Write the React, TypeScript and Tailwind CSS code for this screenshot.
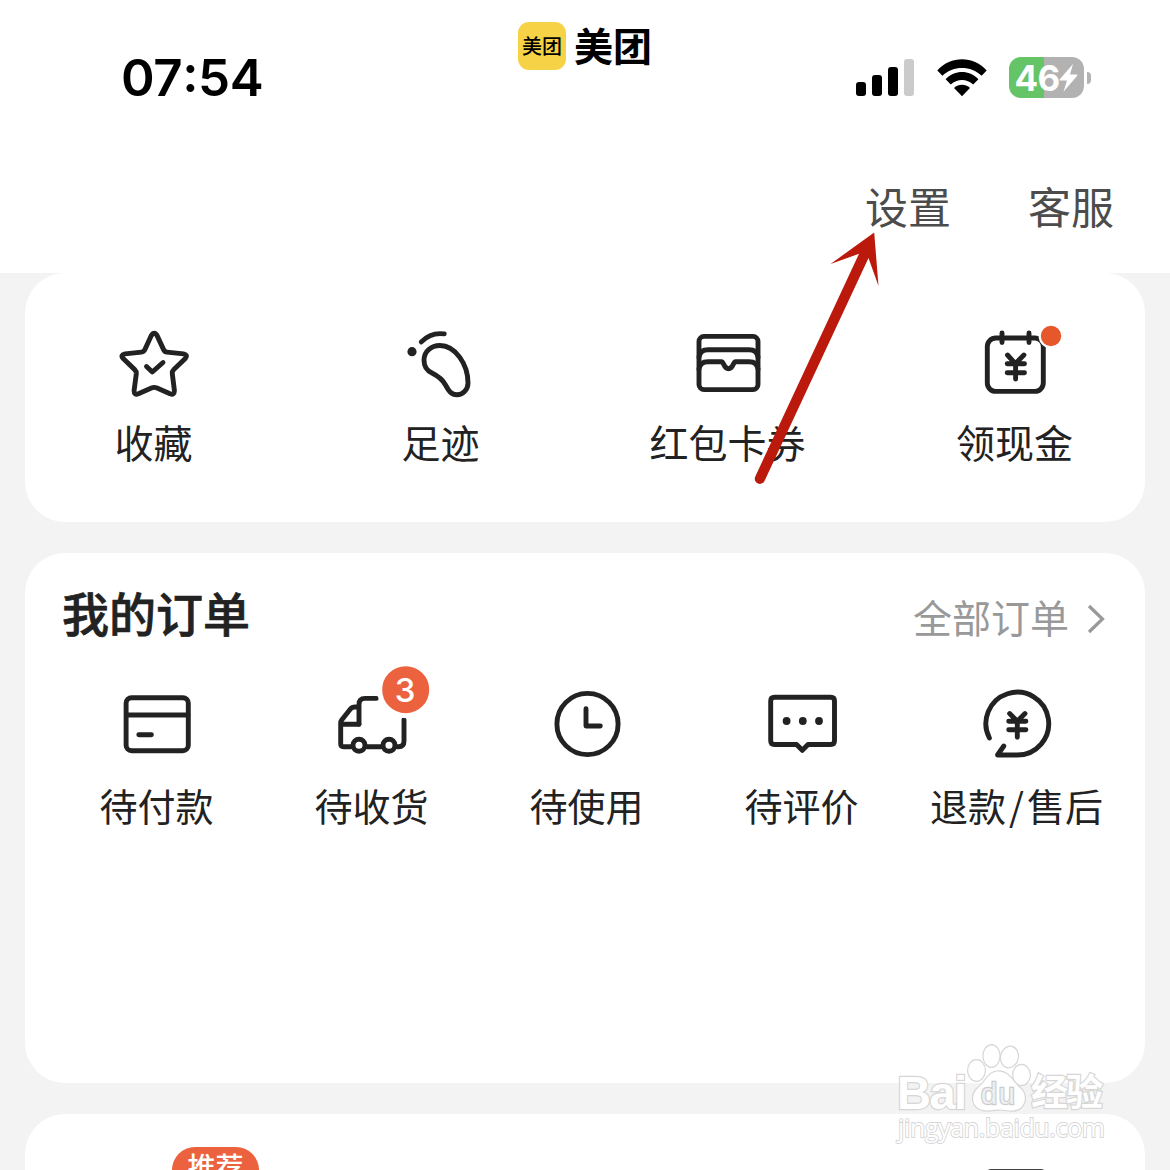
import type { ReactNode } from 'react';

type IconProps = {
  children: ReactNode;
};

type EntryProps = {
  label: ReactNode;
  icon: ReactNode;
};

const Icon = ({ children }: IconProps) => (
  <svg
    className="h-20 w-20 overflow-visible"
    viewBox="0 0 80 80"
    fill="none"
    stroke="#222222"
    strokeWidth="4.9"
    strokeLinecap="round"
    strokeLinejoin="round"
  >
    {children}
  </svg>
);

const StarIcon = () => (
  <Icon>
    <path d="M37.3 12.6 Q40.2 8 43.1 12.6 L49.6 26.6 Q50.6 28.8 53 29.1 L69.5 30.9 Q74.5 32 71.3 35.6 L59.8 46.6 Q58 48.3 58.3 50.8 L60.4 67.5 Q60.4 72.5 56 70.8 L43 65 Q40.2 63.8 37.4 65 L24.4 70.8 Q20 72.5 20.1 67.5 L22.3 50.8 Q22.5 48.3 20.7 46.6 L9.2 35.6 Q6 32 11 30.9 L27.5 29.1 Q29.9 28.8 30.9 26.6 Z" />
    <path d="M32.5 43.5 L38.3 49 L49 39.5" />
  </Icon>
);

const FootprintIcon = () => (
  <Icon>
    <circle cx="11" cy="28.7" r="4.6" fill="#222222" stroke="none" />
    <path d="M20.3 18.9 C27 12 34 9.6 43.2 10.9" />
    <path d="M39 22.5 C54 22.5 67 41 67 60 C67 67 61.5 71.7 56 71.7 C50 71.7 47.5 67.5 44.5 62 C41 55.5 37 53 31 50 C25.5 47.5 23 42 23 37 C23 28.5 30 22.5 39 22.5 Z" />
  </Icon>
);

const CouponIcon = () => (
  <Icon>
    <rect x="11" y="13.4" width="59" height="53.2" rx="5" />
    <path d="M11 34 Q12 26.7 20 26.7 H61 Q69 26.7 70 34" />
    <path d="M11 46 Q12 38.7 20 38.7 H33.5 C36 38.7 35.5 45.7 40.5 45.7 C45.5 45.7 45 38.7 47.5 38.7 H61 Q69 38.7 70 46" />
  </Icon>
);

const CashIcon = () => (
  <Icon>
    <rect x="12.3" y="15" width="56" height="53.4" rx="8.5" />
    <path d="M27 10 V19.5 M54 10 V19.5" />
    <path d="M32.5 32 L40.3 40.7 L48.9 32 M32.2 40.7 H49.5 M32.2 49.7 H49.5 M40.6 40.7 V56" />
    <circle cx="76" cy="13" r="11.3" fill="#e6582b" stroke="#ffffff" strokeWidth="2.2" />
  </Icon>
);

const PayIcon = () => (
  <Icon>
    <rect x="9.1" y="12.7" width="62.2" height="53" rx="5.5" />
    <path d="M9.5 30 H71 M21.8 49.7 H34.4" />
  </Icon>
);

const TruckIcon = () => (
  <Icon>
    <path d="M27 39.3 V19.5 Q27 13.4 33 13.4 H44.3" />
    <path d="M26.5 22 H23 Q20 22 18.2 24.2 L9.7 35 Q8.7 36.4 8.7 38 V59 Q8.7 61.7 11.5 61.7 H19 M9.5 39.3 H27" />
    <path d="M35 61.7 H49 M65 61.7 H66.5 Q72 61.7 72 56 V34.5" />
    <circle cx="27" cy="60.3" r="6" />
    <circle cx="57" cy="60.3" r="6" />
    <circle cx="73.7" cy="4.7" r="26" fill="#ec623e" stroke="#ffffff" strokeWidth="5" />
    <text
      x="73.2"
      y="16.5"
      textAnchor="middle"
      fill="#ffffff"
      stroke="none"
      className="font-['Inter',sans-serif] text-[33px] font-medium"
    >
      3
    </text>
  </Icon>
);

const ClockIcon = () => (
  <Icon>
    <circle cx="40.5" cy="39" r="30.6" />
    <path d="M39 23.7 V41 H53.3" />
  </Icon>
);

const CommentIcon = () => (
  <Icon>
    <path d="M12.5 12.2 H68.7 Q72.5 12.2 72.5 16 V55.7 Q72.5 59.5 68.7 59.5 H46 L40.3 65.3 L34.6 59.5 H12.5 Q8.7 59.5 8.7 55.7 V16 Q8.7 12.2 12.5 12.2 Z" />
    <g fill="#222222" stroke="none">
      <circle cx="24.6" cy="36" r="3.9" />
      <circle cx="40.8" cy="36" r="3.9" />
      <circle cx="57" cy="36" r="3.9" />
    </g>
  </Icon>
);

const RefundIcon = () => (
  <Icon>
    <path d="M12.4 53 A31.4 31.4 0 1 1 40.2 70 H20.5 L26.8 61" />
    <path d="M32.6 28.6 L40.3 36.2 L48 28.6 M31.7 36.2 H48.9 M31.7 44.7 H48.9 M40.3 36.2 V52.3" />
  </Icon>
);

const services: EntryProps[] = [
  { label: '收藏', icon: <StarIcon /> },
  { label: '足迹', icon: <FootprintIcon /> },
  { label: '红包卡券', icon: <CouponIcon /> },
  { label: '领现金', icon: <CashIcon /> },
];

const refundLabel = (
  <span>
    退款
    <span className="px-[3px]">/</span>
    售后
  </span>
);

const orders: EntryProps[] = [
  { label: '待付款', icon: <PayIcon /> },
  { label: '待收货', icon: <TruckIcon /> },
  { label: '待使用', icon: <ClockIcon /> },
  { label: '待评价', icon: <CommentIcon /> },
  { label: refundLabel, icon: <RefundIcon /> },
];

const StatusIcons = () => (
  <div className="flex items-center">
    <div className="flex h-[37px] items-end gap-1.5">
      <div className="h-3.5 w-2.5 rounded-[3px] bg-black" />
      <div className="h-[21px] w-2.5 rounded-[3px] bg-black" />
      <div className="h-[29px] w-2.5 rounded-[3px] bg-black" />
      <div className="h-[37px] w-2.5 rounded-[3px] bg-[#cbcbcb]" />
    </div>
    <svg className="ml-[22px] h-[38px] w-[52px]" viewBox="0 0 52 38">
      <path d="M1.3 11.4 C15 -3.4 37 -3.4 50.7 11.4 L45.6 16.8 C35 6.4 17 6.4 6.4 16.8 Z" />
      <path d="M9.6 20.2 C19 10.6 33 10.6 42.4 20.2 L37.2 25.6 C31 19.6 21 19.6 14.8 25.6 Z" />
      <path d="M18 29 C22.6 24.6 29.4 24.6 34 29 L26 37.3 Z" />
    </svg>
    <div className="ml-[21px] flex h-[41px] w-[75px] items-center justify-center rounded-xl bg-linear-to-r from-[#65c466] from-[35px] to-[#b2b2b2] to-[35px] font-['Inter',sans-serif] text-[35px] font-bold tracking-[-0.8px] text-white">
      <span className="pt-0.5">46</span>
      <svg className="h-7 w-[19px]" viewBox="0 0 19 28" fill="#ffffff">
        <path d="M14 0 L.6 15.4 Q0 16.6 1.5 16.6 H8 L4.5 27.8 L18.2 11.8 Q19 10.5 17.4 10.5 H11 Z" />
      </svg>
    </div>
    <div className="ml-[3px] h-3 w-1 rounded-r-full bg-[#b2b2b2]" />
  </div>
);

const Header = () => (
  <header className="h-[273px] bg-white">
    <div className="flex h-[140px] pr-[79px] pl-[121px]">
      <div className="flex w-[397px] pt-[47px] font-['Inter',sans-serif] text-[51px] leading-[62px] font-semibold tracking-[-0.4px] text-black">
        <span>07</span>
        <span className="-mt-1">:</span>
        <span>54</span>
      </div>
      <div className="flex items-start gap-2 pt-[22px]">
        <div className="flex h-12 w-12 items-center justify-center rounded-[11px] bg-[#f6d346] text-xl leading-none font-medium text-black">
          美团
        </div>
        <div className="text-[39px] leading-[44px] font-bold text-black">美团</div>
      </div>
      <div className="ml-auto flex items-start pt-[57px]">
        <StatusIcons />
      </div>
    </div>
    <nav className="flex justify-end gap-[77px] pt-[33px] pr-14 text-[43px] leading-[64px] text-[#4c4c4c]">
      <span>设置</span>
      <span>客服</span>
    </nav>
  </header>
);

const Entry = ({ label, icon }: EntryProps) => (
  <div className="flex flex-col items-center whitespace-nowrap">
    {icon}
    {label}
  </div>
);

const ServiceCard = () => (
  <section className="h-[249px] rounded-[40px] bg-white pt-[50px]">
    <div className="-mr-[13px] -ml-[15px] grid grid-cols-4 text-[39px] leading-[77px]">
      {services.map((item, i) => <Entry key={i} {...item} />)}
    </div>
  </section>
);

const OrderCard = () => (
  <section className="h-[530px] rounded-[40px] bg-white">
    <div className="flex h-[132px] items-start justify-between pt-[29px] pr-10 pl-[37px]">
      <h2 className="text-[47px] leading-[60px] font-medium [-webkit-text-stroke:0.7px_#222222]">我的订单</h2>
      <div className="flex items-center gap-[18px] pt-1 text-[39px] leading-[60px] text-[#999999]">
        <span>全部订单</span>
        <svg className="mt-1.5 h-8 w-[18px]" viewBox="0 0 18 32" fill="none" stroke="#999999" strokeWidth="3.2">
          <path d="M2 3 L15.5 16 L2 29" />
        </svg>
      </div>
    </div>
    <div className="grid grid-cols-5 pr-[21px] pl-6 text-[38px] leading-[79px]">
      {orders.map((item, i) => <Entry key={i} {...item} />)}
    </div>
  </section>
);

const RecommendCard = () => (
  <section className="flex h-[200px] items-start rounded-[40px] bg-white pt-[33px] pl-[147px]">
    <div className="h-[46px] w-[87px] rounded-full bg-[#ec623e] text-center text-[28px] leading-[38px] font-medium text-white">
      推荐
    </div>
    <div className="mt-[22px] ml-[728px] h-5 w-[58px] rounded-t-sm bg-[#444444]" />
  </section>
);

// Hand drawn pointer towards the settings entry
const Arrow = () => (
  <svg className="absolute top-0 left-0 h-[500px] w-[900px]" viewBox="0 0 900 500">
    <path
      fill="#bb190b"
      d="M874.2 232.5 L830.5 264 L859 253.8 L755.3 476.5 A5.1 5.1 0 0 0 764.5 481 L868.5 258 L878.5 286 Z"
    />
  </svg>
);

const Watermark = () => (
  <svg className="absolute top-[1040px] left-[890px] h-[120px] w-[230px]" viewBox="0 0 230 120">
    <g fill="#ffffff" stroke="#d6d6d6" strokeWidth="2.4" paintOrder="stroke">
      <text x="7" y="69" textLength="70" className="font-['Liberation_Sans',sans-serif] text-[47px] font-bold">Bai</text>
      <ellipse cx="86.5" cy="30.5" rx="8.3" ry="10.3" />
      <ellipse cx="101.5" cy="16" rx="8" ry="10.7" />
      <ellipse cx="119.5" cy="17" rx="8.3" ry="10.3" transform="rotate(12 119.5 17)" />
      <ellipse cx="131.5" cy="35" rx="8.3" ry="10" />
      <path d="M108.5 31.5 C119 31.5 123 42 130 48 C139 55 135 71 122 70.5 C116 70.5 112 69 108 69.5 C103 70 98 71 93 70 C82 68 80 55 88 48 C96 42 98 31.5 108.5 31.5 Z" />
      <text
        x="91"
        y="64"
        textLength="34"
        fill="#efefef"
        stroke="#cccccc"
        className="font-['Liberation_Sans',sans-serif] text-[29px]"
      >
        du
      </text>
      <text x="141" y="66" textLength="72" className="text-[37px] font-bold">经验</text>
      <text x="8" y="97" textLength="207" strokeWidth="1.8" className="font-['Open_Sans',sans-serif] text-[25px]">
        jingyan.baidu.com
      </text>
    </g>
  </svg>
);

export default function App() {
  return (
    <div
      lang="zh-CN"
      className="relative h-[1170px] w-[1170px] overflow-hidden bg-[#f3f3f3] font-['Noto_Sans_CJK_SC',sans-serif] text-[#222222]"
    >
      <Header />
      <main className="flex flex-col gap-[31px] px-[25px]">
        <ServiceCard />
        <OrderCard />
        <RecommendCard />
      </main>
      <Arrow />
      <Watermark />
    </div>
  );
}
